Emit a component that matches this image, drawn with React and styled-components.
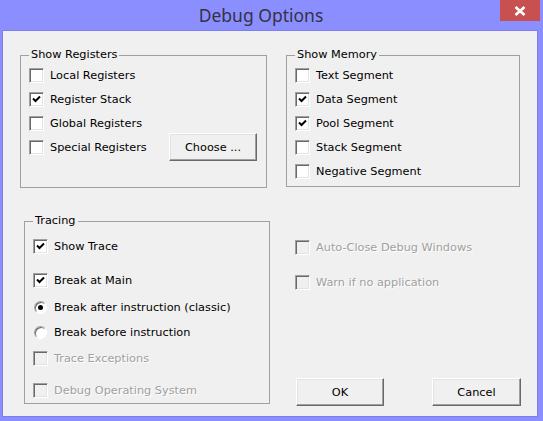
import styled, { createGlobalStyle } from "styled-components";

const GlobalStyle = createGlobalStyle`
  html, body {
    margin: 0;
    padding: 0;
    background: #8a8eff;
  }
  body {
    font-family: "DejaVu Sans", "Liberation Sans", sans-serif;
  }
`;

const Window = styled.div`
  width: 543px;
  height: 421px;
  background: #8a8eff;
  display: flex;
  flex-direction: column;
  box-sizing: border-box;
  padding: 0 5px 4px 2px;
`;

const TitleBar = styled.div`
  height: 30px;
  display: flex;
  align-items: flex-start;
`;

const Title = styled.div`
  flex: 1;
  text-align: center;
  padding-left: 20px;
  padding-top: 3px;
  font-family: "Noto Sans", "Open Sans", sans-serif;
  font-size: 17.5px;
  color: #333344;
`;

const CloseButton = styled.div`
  width: 40px;
  height: 21px;
  margin-right: -2px;
  background: #c75050;
  display: flex;
  align-items: center;
  justify-content: center;
`;

const Client = styled.div`
  flex: 1;
  background: #f0f0f0;
  border: 1px solid #7b7fee;
  display: flex;
  flex-direction: column;
  padding: 24px 0 0 17px;
  font-size: 11.3px;
  color: #000;
`;

const TopRow = styled.div`
  display: flex;
  gap: 19px;
`;

const BottomRow = styled.div`
  display: flex;
  margin-top: 33px;
`;

const Group = styled.div`
  position: relative;
  box-sizing: border-box;
  width: ${(p) => p.$w}px;
  height: ${(p) => p.$h}px;
  border: 1px solid #a0a0a0;
  padding: ${(p) => p.$pad || "7px 9px 0 8px"};
  margin-left: ${(p) => p.$ml || 0}px;
  display: flex;
  flex-direction: column;
`;

const Legend = styled.span`
  position: absolute;
  top: -8px;
  left: 8px;
  padding: 0 2px;
  background: #f0f0f0;
  line-height: 14px;
`;

const Row = styled.div`
  display: flex;
  align-items: center;
  height: ${(p) => p.$h || 24}px;
  margin-top: ${(p) => p.$mt || 0}px;
  gap: 6px;
  color: ${(p) => (p.$disabled ? "#a0a0a0" : "#000")};
  text-shadow: ${(p) => (p.$disabled ? "1px 1px 0 #ffffff" : "none")};
  white-space: nowrap;
`;

const Box = styled.span`
  box-sizing: border-box;
  width: 15px;
  height: 15px;
  flex: none;
  border: 1px solid;
  border-color: #a0a0a0 #ffffff #ffffff #a0a0a0;
  box-shadow: inset 1px 1px 0 #696969, inset -1px -1px 0 #e3e3e3;
  background: ${(p) => (p.$disabled ? "#f0f0f0" : "#ffffff")};
  display: flex;
  align-items: center;
  justify-content: center;
`;

const Radio = styled.span`
  box-sizing: border-box;
  width: 13px;
  height: 13px;
  margin: 0 1px 0 1px;
  flex: none;
  border-radius: 50%;
  background: #ffffff;
  border: 1px solid;
  border-color: #a0a0a0 #ffffff #ffffff #a0a0a0;
  box-shadow: inset 1px 1px 0 #696969;
  display: flex;
  align-items: center;
  justify-content: center;

  &::after {
    content: "";
    width: 5px;
    height: 5px;
    border-radius: 50%;
    background: ${(p) => (p.$on ? "#000" : "transparent")};
  }
`;

const Button = styled.div`
  box-sizing: border-box;
  width: ${(p) => p.$w || 88}px;
  height: 28px;
  flex: none;
  margin-left: ${(p) => (p.$push ? "auto" : "0")};
  background: #f0f0f0;
  border: 1px solid;
  border-color: #ffffff #696969 #696969 #ffffff;
  box-shadow: inset -1px -1px 0 #a0a0a0, inset 1px 1px 0 #e3e3e3;
  display: flex;
  align-items: center;
  justify-content: center;
  font-size: 11.3px;
`;

const SideColumn = styled.div`
  display: flex;
  flex-direction: column;
  margin-left: 25px;
  width: 226px;
  padding-top: 14px;
`;

const ButtonRow = styled.div`
  display: flex;
  justify-content: space-between;
  margin-top: auto;
  margin-bottom: -2px;
  padding-left: 1px;
`;

const Check = () => (
  <svg width="9" height="8" viewBox="0 0 9 8">
    <path d="M1 3.5 L3.5 6 L8 1.5" fill="none" stroke="#000" strokeWidth="2" />
  </svg>
);

const CheckRow = ({ label, checked, disabled, h, mt, children }) => (
  <Row $h={h} $mt={mt} $disabled={disabled}>
    <Box $disabled={disabled}>{checked && <Check />}</Box>
    <span>{label}</span>
    {children}
  </Row>
);

const App = () => (
  <>
    <GlobalStyle />
    <Window>
      <TitleBar>
        <Title>Debug Options</Title>
        <CloseButton>
          <svg width="12" height="10" viewBox="0 0 12 10">
            <path d="M1.5 1 L10.5 9 M10.5 1 L1.5 9" stroke="#fff" strokeWidth="2.6" />
          </svg>
        </CloseButton>
      </TitleBar>
      <Client>
        <TopRow>
          <Group $w={247} $h={133}>
            <Legend>Show Registers</Legend>
            <CheckRow label="Local Registers" />
            <CheckRow label="Register Stack" checked />
            <CheckRow label="Global Registers" />
            <CheckRow label="Special Registers">
              <Button $push>Choose ...</Button>
            </CheckRow>
          </Group>
          <Group $w={234} $h={132}>
            <Legend>Show Memory</Legend>
            <CheckRow label="Text Segment" />
            <CheckRow label="Data Segment" checked />
            <CheckRow label="Pool Segment" checked />
            <CheckRow label="Stack Segment" />
            <CheckRow label="Negative Segment" />
          </Group>
        </TopRow>
        <BottomRow>
          <Group $w={246} $h={183} $ml={4} $pad="13px 9px 0 8px">
            <Legend>Tracing</Legend>
            <CheckRow label="Show Trace" checked h={22} />
            <CheckRow label="Break at Main" checked h={22} mt={12} />
            <Row $h={22} $mt={5}>
              <Radio $on />
              <span>Break after instruction (classic)</span>
            </Row>
            <Row $h={22} $mt={3}>
              <Radio />
              <span>Break before instruction</span>
            </Row>
            <CheckRow label="Trace Exceptions" disabled h={22} mt={4} />
            <CheckRow label="Debug Operating System" disabled h={22} mt={10} />
          </Group>
          <SideColumn>
            <CheckRow label="Auto-Close Debug Windows" disabled h={22} mt={1} />
            <CheckRow label="Warn if no application" disabled h={22} mt={13} />
            <ButtonRow>
              <Button>OK</Button>
              <Button $w={89}>Cancel</Button>
            </ButtonRow>
          </SideColumn>
        </BottomRow>
      </Client>
    </Window>
  </>
);

export default App;
